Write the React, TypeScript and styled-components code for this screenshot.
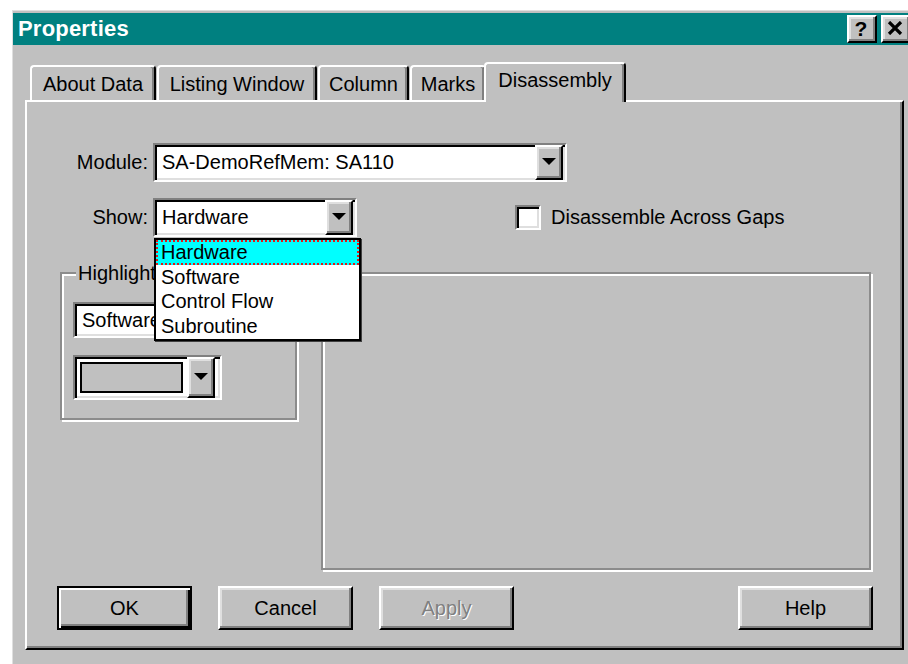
import React from "react";
import styled, { createGlobalStyle, css } from "styled-components";

const FACE = "#c0c0c0";
const LIGHT = "#dfdfdf";
const SHADOW = "#808080";

const GlobalStyle = createGlobalStyle`
  html, body { margin: 0; padding: 0; background: #ffffff; }
  body {
    font-family: "Liberation Sans", Arial, sans-serif;
    font-size: 20px;
    color: #000;
  }
  * { box-sizing: border-box; }
`;

const raised = css`
  background: ${FACE};
  border-style: solid;
  border-width: 2px;
  border-color: #fff #000 #000 #fff;
  box-shadow: inset -2px -2px 0 ${SHADOW}, inset 2px 2px 0 ${LIGHT};
`;

const sunken = css`
  border-style: solid;
  border-width: 2px;
  border-color: ${SHADOW} #fff #fff ${SHADOW};
  box-shadow: inset 2px 2px 0 #000, inset -2px -2px 0 ${LIGHT};
`;

const etched = css`
  border: 2px solid #8c8c8c;
  box-shadow: inset 2px 2px 0 #fff, 2px 2px 0 #fff;
`;

const Screen = styled.div`
  width: 908px;
  height: 664px;
  overflow: hidden;
  padding: 10px 0 0 12px;
`;

const Window = styled.div`
  width: 903px;
  height: 654px;
  background: ${FACE};
  border-top: 1px solid ${LIGHT};
  border-left: 1px solid ${LIGHT};
  padding: 2px 2px 0 0;
  display: flex;
  flex-direction: column;
`;

const TitleBar = styled.div`
  height: 32px;
  flex-shrink: 0;
  background: #008080;
  display: flex;
  align-items: center;
  justify-content: space-between;
  padding: 0 2px 0 5px;
`;

const Title = styled.span`
  color: #fff;
  font-weight: bold;
  font-size: 22px;
  letter-spacing: 0.2px;
`;

const CaptionButtons = styled.div`
  display: flex;
  gap: 4px;
`;

const CaptionButton = styled.div`
  ${raised};
  width: 30px;
  height: 28px;
  display: flex;
  align-items: center;
  justify-content: center;
  font-weight: bold;
  font-size: 21px;
  line-height: 1;
  padding: 0 2px 2px 0;
`;

const TabStrip = styled.div`
  display: flex;
  align-items: flex-end;
  gap: 1px;
  height: 38px;
  margin: 17px 0 0 17px;
  flex-shrink: 0;
`;

const Tab = styled.div<{ $w: number; $active?: boolean }>`
  width: ${(p) => p.$w}px;
  height: ${(p) => (p.$active ? 40 : 35)}px;
  background: ${FACE};
  border-style: solid;
  border-width: 2px 2px 0 2px;
  border-color: #fff #000 transparent #fff;
  border-radius: 4px 4px 0 0;
  box-shadow: inset -2px 0 0 ${SHADOW};
  display: flex;
  align-items: center;
  justify-content: center;
  white-space: nowrap;
  padding-top: ${(p) => (p.$active ? 0 : 2)}px;
  padding-bottom: ${(p) => (p.$active ? 6 : 0)}px;
  ${(p) =>
    p.$active &&
    css`
      position: relative;
      z-index: 2;
      margin-bottom: -2px;
      margin-left: -3px;
    `}
`;

const Sheet = styled.div`
  margin-left: 12px;
  width: 879px;
  height: 550px;
  border-style: solid;
  border-width: 2px;
  border-color: #fff #000 #000 #fff;
  box-shadow: inset -2px -2px 0 ${SHADOW};
  padding: 41px 29px 0 0;
  display: flex;
  flex-direction: column;
`;

const FieldRow = styled.div<{ $top?: number }>`
  display: flex;
  align-items: center;
  height: 39px;
  margin-top: ${(p) => p.$top ?? 0}px;
`;

const FieldLabel = styled.span`
  width: 121px;
  margin-right: 5px;
  text-align: right;
  white-space: nowrap;
`;

const Combo = styled.div<{ $w: number; $h: number }>`
  ${sunken};
  position: relative;
  width: ${(p) => p.$w}px;
  height: ${(p) => p.$h}px;
  background: #fff;
  display: flex;
  align-items: stretch;
  padding-right: 2px;
`;

const ComboText = styled.span`
  flex: 1;
  display: flex;
  align-items: center;
  padding-left: 7px;
  white-space: nowrap;
  overflow: hidden;
`;

const DropButton = styled.div`
  ${raised};
  width: 28px;
  display: flex;
  align-items: center;
  justify-content: center;
  padding: 0 1px 1px 0;
`;

const ListBox = styled.div`
  position: absolute;
  top: calc(100% + 3px);
  left: -1px;
  width: 207px;
  background: #fff;
  border: 2px solid #000;
  box-shadow: 1px 1px 0 #404040;
  z-index: 5;
`;

const ListItem = styled.div<{ $selected?: boolean }>`
  height: 24.75px;
  display: flex;
  align-items: center;
  padding-left: 5px;
  white-space: nowrap;
  ${(p) =>
    p.$selected &&
    css`
      background: #00ffff;
      outline: 2px dotted #e01818;
      outline-offset: -2px;
    `}
`;

const CheckRow = styled.label`
  display: flex;
  align-items: center;
  margin-left: 158px;
  gap: 10px;
  white-space: nowrap;
`;

const CheckBox = styled.span`
  ${sunken};
  width: 26px;
  height: 25px;
  background: #fff;
`;

const GroupRow = styled.div`
  display: flex;
  align-items: flex-start;
  gap: 24px;
  margin-top: 35px;
  padding-left: 33px;
`;

const GroupBox = styled.div<{ $w: number; $h: number }>`
  ${etched};
  position: relative;
  width: ${(p) => p.$w}px;
  height: ${(p) => p.$h}px;
  padding: 28px 0 0 11px;
  display: flex;
  flex-direction: column;
  gap: 17px;
`;

const Legend = styled.span`
  position: absolute;
  top: -13px;
  left: 14px;
  padding: 0 2px;
  background: ${FACE};
  line-height: 24px;
`;

const Swatch = styled.div`
  width: 103px;
  margin: 5px 4px 5px 5px;
  border: 2px solid #000;
  background: ${FACE};
`;

const ButtonRow = styled.div`
  display: flex;
  gap: 26px;
  margin-top: 16px;
  padding-left: 30px;
`;

const PushButton = styled.button<{ $default?: boolean; $push?: boolean }>`
  ${raised};
  width: 135px;
  height: 44px;
  font-family: inherit;
  font-size: 20px;
  color: #000;
  padding: 0;
  ${(p) => p.$push && "margin-left: auto;"}
  ${(p) =>
    p.$default &&
    css`
      border-color: #000;
      box-shadow: inset 2px 2px 0 #fff, inset -2px -2px 0 #000,
        inset -4px -4px 0 ${SHADOW};
    `}
  &:disabled {
    color: ${SHADOW};
    text-shadow: 1px 1px 0 #fff;
  }
`;

const DownArrow = () => (
  <svg width="14" height="8" viewBox="0 0 14 8">
    <polygon points="0,0 14,0 7,7" fill="#000" />
  </svg>
);

const CloseGlyph = () => (
  <svg width="16" height="14" viewBox="0 0 16 14">
    <path d="M2 1 L14 13 M14 1 L2 13" stroke="#000" strokeWidth="3.2" />
  </svg>
);

const tabs = [
  { label: "About Data", w: 126 },
  { label: "Listing Window", w: 160 },
  { label: "Column", w: 91 },
  { label: "Marks", w: 76 },
  { label: "Disassembly", w: 142, active: true },
];

const showOptions = ["Hardware", "Software", "Control Flow", "Subroutine"];

export default function App() {
  return (
    <>
      <GlobalStyle />
      <Screen>
        <Window>
          <TitleBar>
            <Title>Properties</Title>
            <CaptionButtons>
              <CaptionButton>?</CaptionButton>
              <CaptionButton>
                <CloseGlyph />
              </CaptionButton>
            </CaptionButtons>
          </TitleBar>

          <TabStrip>
            {tabs.map((t) => (
              <Tab key={t.label} $w={t.w} $active={t.active}>
                {t.label}
              </Tab>
            ))}
          </TabStrip>

          <Sheet>
            <FieldRow>
              <FieldLabel>Module:</FieldLabel>
              <Combo $w={414} $h={39}>
                <ComboText>SA-DemoRefMem: SA110</ComboText>
                <DropButton>
                  <DownArrow />
                </DropButton>
              </Combo>
            </FieldRow>

            <FieldRow $top={16}>
              <FieldLabel>Show:</FieldLabel>
              <Combo $w={204} $h={39}>
                <ComboText>Hardware</ComboText>
                <DropButton>
                  <DownArrow />
                </DropButton>
                <ListBox>
                  {showOptions.map((o, i) => (
                    <ListItem key={o} $selected={i === 0}>
                      {o}
                    </ListItem>
                  ))}
                </ListBox>
              </Combo>
              <CheckRow>
                <CheckBox />
                Disassemble Across Gaps
              </CheckRow>
            </FieldRow>

            <GroupRow>
              <GroupBox $w={237} $h={148}>
                <Legend>Highlight</Legend>
                <Combo $w={212} $h={36}>
                  <ComboText>Software</ComboText>
                  <DropButton>
                    <DownArrow />
                  </DropButton>
                </Combo>
                <Combo $w={149} $h={45}>
                  <Swatch />
                  <DropButton>
                    <DownArrow />
                  </DropButton>
                </Combo>
              </GroupBox>
              <GroupBox $w={550} $h={298} />
            </GroupRow>

            <ButtonRow>
              <PushButton $default>OK</PushButton>
              <PushButton>Cancel</PushButton>
              <PushButton disabled>Apply</PushButton>
              <PushButton $push>Help</PushButton>
            </ButtonRow>
          </Sheet>
        </Window>
      </Screen>
    </>
  );
}
